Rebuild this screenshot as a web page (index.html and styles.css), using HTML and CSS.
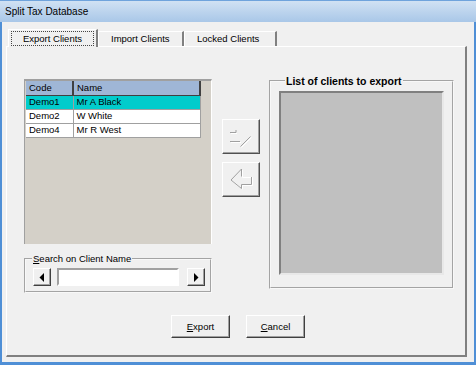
FILE: index.html
```html
<!DOCTYPE html>
<html lang="en">
<head>
    <meta charset="UTF-8">
    <title>Split Tax Database</title>
    <link rel="stylesheet" href="styles.css">
</head>
<body>
    <div class="window">
        <div class="titlebar">Split Tax Database</div>
        <div class="client">
            <div class="tabs">
                <div class="tab active"><span class="focus">Export Clients</span></div>
                <div class="tab">Import Clients</div>
                <div class="tab">Locked Clients</div>
            </div>
            <div class="panel">
                <div class="main">
                    <div class="left-col">
                        <div class="grid">
                            <table class="clients">
                                <thead>
                                    <tr><th class="code">Code</th><th>Name</th></tr>
                                </thead>
                                <tbody>
                                    <tr class="selected"><td>Demo1</td><td>Mr A Black</td></tr>
                                    <tr><td>Demo2</td><td>W White</td></tr>
                                    <tr><td>Demo4</td><td>Mr R West</td></tr>
                                </tbody>
                            </table>
                        </div>
                        <fieldset class="group search">
                            <legend><u>S</u>earch on Client Name</legend>
                            <div class="search-row">
                                <button class="mini-btn">
                                    <svg width="6" height="9" viewBox="0 0 6 9"><polygon points="5,0 5,9 0.5,4.5" fill="#000"/></svg>
                                </button>
                                <input class="search-box" type="text">
                                <button class="mini-btn">
                                    <svg width="6" height="9" viewBox="0 0 6 9"><polygon points="1,0 1,9 5.5,4.5" fill="#000"/></svg>
                                </button>
                            </div>
                        </fieldset>
                    </div>
                    <div class="move-col">
                        <!-- disabled (embossed) move arrows -->
                        <button class="move-btn">
                            <svg width="36" height="33" viewBox="0 0 36 33">
                                <path d="M8 13.5 H14 M8 22.5 H18 M18.5 27.5 L28.5 17.5" stroke="#fff" fill="none"/>
                                <path d="M7 12.5 H13 V10 M7 21.5 H17 M17.5 26.5 L27.5 16.5" stroke="#a0a0a0" fill="none"/>
                            </svg>
                        </button>
                        <button class="move-btn">
                            <svg width="36" height="33" viewBox="0 0 36 33">
                                <path d="M19.5 7 V14.5 H29.5 V22.5 H19.5 V26 L9.5 18" stroke="#fff" fill="none"/>
                                <path d="M18.5 6 V13.5 M28.5 14 V21.5 H18.5 V25.5 L8 17 L18.5 6" stroke="#a0a0a0" fill="none"/>
                            </svg>
                        </button>
                    </div>
                    <fieldset class="group export-list">
                        <legend class="bold">List of clients to export</legend>
                        <div class="listbox"></div>
                    </fieldset>
                </div>
                <div class="actions">
                    <button class="btn"><u>E</u>xport</button>
                    <button class="btn"><u>C</u>ancel</button>
                </div>
            </div>
        </div>
    </div>
</body>
</html>
```

FILE: styles.css
```css
* {
    margin: 0;
    padding: 0;
    box-sizing: border-box;
}

body {
    font-family: "Liberation Sans", Arial, sans-serif;
    font-size: 9.5px;
    color: #000;
    background: #f0f0f0;
}

.window {
    width: 476px;
    height: 365px;
    display: flex;
    flex-direction: column;
    border: 2px solid #4f8fd6;
    border-top: none;
    border-bottom-width: 3px;
    background: #f0f0f0;
}

.titlebar {
    height: 22px;
    margin: 0 -2px;
    padding: 3px 0 0 5px;
    font-size: 10px;
    line-height: 16px;
    background: linear-gradient(#d0e1f3, #a9c7e8);
    border-top: 1px solid #6fa3dc;
}

.client {
    flex-grow: 1;
    display: flex;
    flex-direction: column;
    padding: 7px 7px 5px 4px;
}

.tabs {
    display: flex;
    height: 17px;
    padding-left: 2px;
    align-items: flex-end;
}

.tab {
    height: 15px;
    padding: 0 12px;
    line-height: 14px;
    border: 1px solid #fff;
    border-right: 2px solid #808080;
    border-bottom: none;
    background: #f0f0f0;
}

.tab:nth-child(2) { width: 86px; }
.tab:nth-child(3) { width: 93px; }

.tab.active {
    width: 90px;
    height: 18px;
    margin-bottom: -1px;
    padding: 1px 2px 0;
    position: relative;
    z-index: 1;
}

.focus {
    display: block;
    border: 1px dotted #444;
    line-height: 13px;
    text-align: center;
}

.panel {
    flex-grow: 1;
    display: flex;
    flex-direction: column;
    border: 1px solid #fff;
    border-right: 2px solid #808080;
    border-bottom: 2px solid #808080;
    padding: 32px 0 0 17px;
}

.main {
    display: flex;
    height: 216px;
}

.left-col {
    width: 188px;
    display: flex;
    flex-direction: column;
}

.grid {
    height: 165px;
    background: #d4d0c8;
    border-top: 2px solid #a0a0a0;
    border-left: 1px solid #a0a0a0;
    border-right: 1px solid #fff;
    padding-left: 1px;
}

.clients {
    width: 175px;
    border-collapse: collapse;
    background: #fff;
}

.clients th,
.clients td {
    height: 14px;
    padding: 0 0 0 3px;
    line-height: 12px;
    text-align: left;
    font-weight: normal;
    border: 1px solid #a0a0a0;
    border-top: none;
    border-left: none;
}

.clients th {
    background: #9fb6d6;
    border-right: 2px solid #404040;
    border-bottom: 1px solid #404040;
}

.clients .code {
    width: 47px;
}

.clients tr.selected td {
    background: #00cccc;
}

.group {
    border: 2px groove #f8f8f8;
}

.group legend {
    margin-left: 6px;
    padding: 0 1px;
    line-height: 10px;
}

.group legend.bold {
    font-size: 10.5px;
    font-weight: bold;
}

.search {
    margin-top: 10px;
    height: 39px;
}

.search-row {
    display: flex;
    align-items: center;
    padding: 4px 0 0 7px;
}

.mini-btn {
    width: 18px;
    height: 18px;
    display: flex;
    align-items: center;
    justify-content: center;
    background: #f0f0f0;
    border: 1px solid;
    border-color: #fff #404040 #404040 #fff;
    box-shadow: inset -1px -1px #a0a0a0;
}

.search-box {
    width: 122px;
    height: 18px;
    margin: 0 8px 0 6px;
    border: 2px solid;
    border-color: #a0a0a0 #fff #fff #a0a0a0;
    background: #fff;
}

.move-col {
    width: 57px;
    display: flex;
    flex-direction: column;
    align-items: center;
    padding-top: 40px;
    gap: 8px;
}

.move-btn {
    width: 38px;
    height: 35px;
    display: flex;
    align-items: center;
    justify-content: center;
    background: #f0f0f0;
    border: 1px solid;
    border-color: #fff #505050 #505050 #fff;
    box-shadow: inset -1px -1px #a0a0a0;
}

.export-list {
    width: 185px;
    margin-top: -3px;
    height: 213px;
    padding: 5px 8px 0 8px;
}

.listbox {
    height: 184px;
    background: #c0c0c0;
    border: 2px solid;
    border-color: #808080 #e8e8e8 #e8e8e8 #808080;
}

.actions {
    display: flex;
    justify-content: center;
    gap: 16px;
    margin-top: 20px;
    padding-right: 13px;
}

.btn {
    width: 59px;
    height: 23px;
    font-family: "Liberation Sans", Arial, sans-serif;
    font-size: 9.5px;
    background: #f0f0f0;
    border: 1px solid;
    border-color: #fff #404040 #404040 #fff;
    box-shadow: inset -1px -1px #a0a0a0;
}
```
